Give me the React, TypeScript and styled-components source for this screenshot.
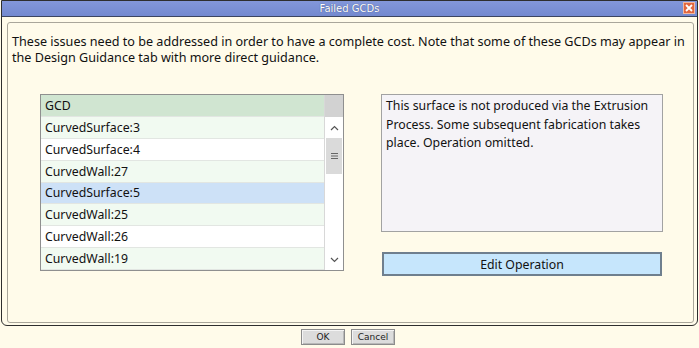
import React from 'react';
import styled, { createGlobalStyle } from 'styled-components';

const GlobalStyle = createGlobalStyle`
  html, body {
    margin: 0;
    padding: 0;
    background: #fffbea;
  }
  body {
    width: 699px;
    height: 348px;
    overflow: hidden;
    font-family: 'Noto Sans', 'Open Sans', sans-serif;
  }
`;

const Window = styled.div`
  box-sizing: border-box;
  width: 697px;
  height: 326px;
  margin-left: 1px;
  border: 1px solid #2e2e2e;
  border-radius: 0 0 6px 6px;
  background: #fffbea;
  display: flex;
  flex-direction: column;
`;

const TitleBar = styled.div`
  position: relative;
  height: 15px;
  border-bottom: 1px solid #3c4560;
  background: linear-gradient(#8397da, #7389cf);
  display: flex;
  align-items: center;
  justify-content: center;
  color: #ffffff;
  font-family: 'DejaVu Sans', sans-serif;
  font-size: 10px;
  text-shadow: 0 0 1px #33406a;
`;

const CloseButton = styled.div`
  position: absolute;
  right: 2px;
  top: 1px;
  width: 12px;
  height: 12px;
  background: #e2663f;
  border: 1px solid #f2b79e;
  box-sizing: border-box;
  display: flex;
  align-items: center;
  justify-content: center;
`;

const Panel = styled.div`
  flex: 1;
  margin: 5px 3px 2px 5px;
  border: 1px solid #a9a69a;
  border-radius: 3px;
  display: flex;
  flex-direction: column;
  padding: 11px 4px 0 4px;
`;

const Intro = styled.p`
  margin: 0;
  font-size: 12.6px;
  line-height: 16px;
  color: #111;
  white-space: nowrap;
`;

const Content = styled.div`
  display: flex;
  margin: 28px 0 0 28px;
  gap: 37px;
`;

const ListBox = styled.div`
  box-sizing: border-box;
  width: 304px;
  height: 177px;
  border: 1px solid #8f8f8f;
  display: flex;
  background: #fff;
`;

const Rows = styled.div`
  flex: 1;
  display: flex;
  flex-direction: column;
`;

const Row = styled.div<{ $tone: 'head' | 'alt' | 'plain' | 'sel' }>`
  height: 22px;
  box-sizing: border-box;
  padding-left: 4px;
  display: flex;
  align-items: center;
  font-size: 12.3px;
  color: #111;
  border-bottom: 1px solid #e2e6e2;
  background: ${(p) =>
    p.$tone === 'head'
      ? '#d0e5d1'
      : p.$tone === 'alt'
      ? '#f1faf1'
      : p.$tone === 'sel'
      ? '#cde1f7'
      : '#ffffff'};
`;

const ScrollBar = styled.div`
  width: 18px;
  border-left: 1px solid #d8d8d8;
  display: flex;
  flex-direction: column;
  background: #fff;
`;

const ScrollHead = styled.div`
  height: 22px;
  background: #d2d2d2;
`;

const ScrollArrow = styled.div`
  height: 21px;
  display: flex;
  align-items: center;
  justify-content: center;
`;

const Thumb = styled.div`
  height: 36px;
  margin: 0 1px;
  background: #dadada;
  display: flex;
  align-items: center;
  justify-content: center;
`;

const Track = styled.div`
  flex: 1;
`;

const Side = styled.div`
  display: flex;
  flex-direction: column;
  gap: 20px;
`;

const Description = styled.div`
  box-sizing: border-box;
  width: 282px;
  height: 138px;
  border: 1px solid #a2a2a2;
  background: #f5f3f7;
  padding: 2px 4px;
  font-size: 12.3px;
  line-height: 18.5px;
  color: #111;
`;

const EditButton = styled.button`
  box-sizing: border-box;
  width: 280px;
  height: 24px;
  margin-left: 1px;
  border: 2px solid #6f7f8e;
  background: #c6e6fc;
  font-family: 'Noto Sans', sans-serif;
  font-size: 12.3px;
  color: #111;
  padding: 0;
`;

const Footer = styled.div`
  display: flex;
  justify-content: center;
  gap: 6px;
  margin-top: 3px;
  padding-right: 3px;
`;

const DialogButton = styled.button`
  box-sizing: border-box;
  width: 44px;
  height: 16px;
  padding: 0;
  border: 1px solid #8c8c8c;
  box-shadow: inset 1px 1px 0 #f4f4f4, inset -1px -1px 0 #b8b8b8;
  background: #dcdcdc;
  font-family: 'DejaVu Sans', sans-serif;
  font-size: 9px;
  color: #222;
`;

const items = [
  'CurvedSurface:3',
  'CurvedSurface:4',
  'CurvedWall:27',
  'CurvedSurface:5',
  'CurvedWall:25',
  'CurvedWall:26',
  'CurvedWall:19',
];

const tones: Array<'alt' | 'plain' | 'sel'> = ['alt', 'plain', 'alt', 'sel', 'alt', 'plain', 'alt'];

const App = () => {
  return (
    <>
      <GlobalStyle />
      <Window>
        <TitleBar>
          Failed GCDs
          <CloseButton>
            <svg width="8" height="8" viewBox="0 0 8 8">
              <path d="M1 1 L7 7 M7 1 L1 7" stroke="#fff" strokeWidth="1.8" />
            </svg>
          </CloseButton>
        </TitleBar>
        <Panel>
          <Intro>
            These issues need to be addressed in order to have a complete cost. Note that some of these GCDs may appear in
            <br />
            the Design Guidance tab with more direct guidance.
          </Intro>
          <Content>
            <ListBox>
              <Rows>
                <Row $tone="head">GCD</Row>
                {items.map((item, i) => (
                  <Row key={item} $tone={tones[i]}>
                    {item}
                  </Row>
                ))}
              </Rows>
              <ScrollBar>
                <ScrollHead />
                <ScrollArrow>
                  <svg width="9" height="6" viewBox="0 0 9 6">
                    <path d="M1 5 L4.5 1.5 L8 5" fill="none" stroke="#555" strokeWidth="1.2" />
                  </svg>
                </ScrollArrow>
                <Thumb>
                  <svg width="7" height="6" viewBox="0 0 7 6">
                    <path d="M0 0.5 H7 M0 3 H7 M0 5.5 H7" stroke="#666" strokeWidth="1" />
                  </svg>
                </Thumb>
                <Track />
                <ScrollArrow>
                  <svg width="9" height="6" viewBox="0 0 9 6">
                    <path d="M1 1 L4.5 4.5 L8 1" fill="none" stroke="#555" strokeWidth="1.2" />
                  </svg>
                </ScrollArrow>
              </ScrollBar>
            </ListBox>
            <Side>
              <Description>
                This surface is not produced via the Extrusion Process. Some subsequent fabrication takes place.
                Operation omitted.
              </Description>
              <EditButton>Edit Operation</EditButton>
            </Side>
          </Content>
        </Panel>
      </Window>
      <Footer>
        <DialogButton>OK</DialogButton>
        <DialogButton>Cancel</DialogButton>
      </Footer>
    </>
  );
};

export default App;
